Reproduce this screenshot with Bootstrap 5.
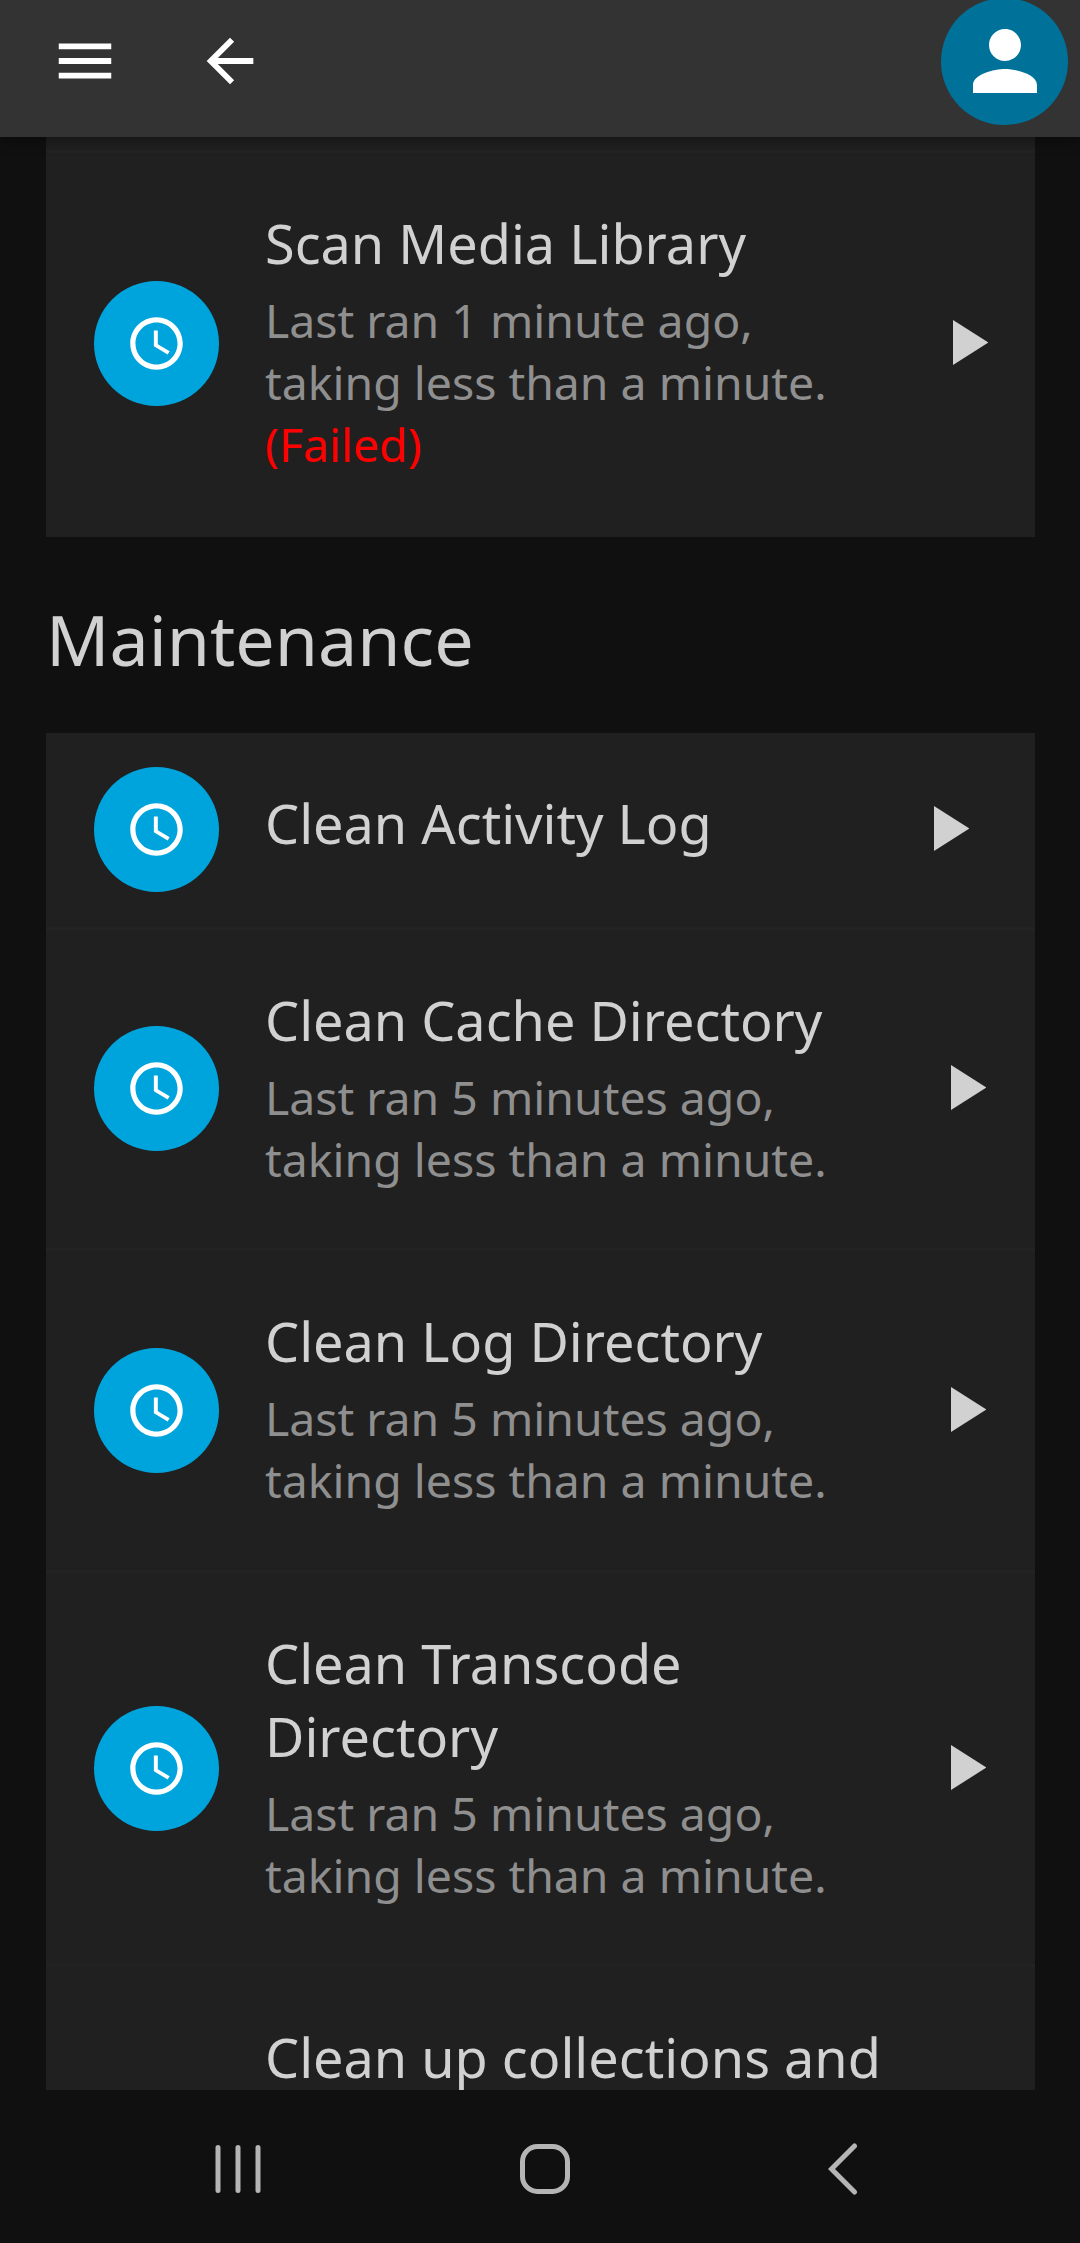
<!DOCTYPE html>
<html lang="en" data-bs-theme="dark">
<head>
<meta charset="utf-8">
<meta name="viewport" content="width=device-width, initial-scale=1">
<title>Scheduled Tasks</title>
<link rel="stylesheet" href="https://cdn.jsdelivr.net/npm/bootstrap@5.3.0/dist/css/bootstrap.min.css">
<style>
  body { font-family: "Noto Sans", sans-serif; background: #101010; color: #d1d1d1; height: 2243px; }
  .app-header { height: 137px; background: #333; padding: 0 12px 15px 50px; box-shadow: 0 2px 14px rgba(0,0,0,.45); z-index: 2; }
  .app-header a { color: #fff; }
  .header-back { margin-left: 75px; }
  .avatar { width: 127px; height: 127px; background: #00729a; color: #fff; margin-top: -1px; margin-bottom: -1px; }
  .page-view { height: 1953px; padding: 0 45px 0 46px; }
  .task-list { --bs-list-group-bg: #202020; --bs-list-group-color: #d1d1d1; --bs-list-group-border-radius: 0; }
  .task-row { border: 0; border-bottom: 3px solid #232323; padding: 0 49px 0 48px; }
  .task-row:last-child { border-bottom-color: #202020; }
  .task-disc { width: 125px; height: 125px; background: #00a4dc; color: #fff; margin-right: 46px; }
  .task-copy { padding: 54px 0 58.5px; width: 640px; }
  .task-copy.single { padding-bottom: 67px; }
  .task-name { font-size: 54px; line-height: 73px; font-weight: 400; margin: 0; color: #d1d1d1; }
  .task-note { font-size: 46.4px; line-height: 62px; margin: 9px 0 0; color: #8f8f8f; width: 570px; }
  .task-failed { color: #f00; }
  .task-play { color: #d1d1d1; margin-bottom: 2px; }
  .play-first { margin-right: -2px; }
  .play-wide { margin-right: 17px; }
  .cut-row { border: 0; }
  .group-title { font-size: 70px; line-height: 95px; font-weight: 400; color: #d1d1d1; margin: 55px 0 46px; }
  .system-nav { height: 153px; padding: 0 222px 0 214px; color: #b5b5b5; background: #101010; }
  .system-nav svg { margin-bottom: -5px; }
</style>
</head>
<body class="d-flex flex-column overflow-hidden m-0">
<svg class="d-none" xmlns="http://www.w3.org/2000/svg">
  <symbol id="clock" viewBox="0 0 24 24"><path fill="currentColor" d="M11.99 2C6.47 2 2 6.48 2 12s4.47 10 9.99 10C17.52 22 22 17.52 22 12S17.52 2 11.99 2zM12 20c-4.42 0-8-3.58-8-8s3.58-8 8-8 8 3.58 8 8-3.58 8-8 8zm.5-13H11v6l5.25 3.15.75-1.23-4.5-2.67z"/></symbol>
  <symbol id="play" viewBox="0 0 35.5 45"><path fill="currentColor" d="M0 0v45l35.5-22.5z"/></symbol>
</svg>

<header class="app-header position-relative flex-shrink-0 d-flex align-items-center">
  <a href="#" class="d-flex" aria-label="Menu"><svg width="70" height="70" viewBox="0 0 24 24"><path fill="currentColor" d="M3 18h18v-2H3v2zm0-5h18v-2H3v2zm0-7v2h18V6H3z"/></svg></a>
  <a href="#" class="d-flex header-back" aria-label="Back"><svg width="70" height="70" viewBox="0 0 24 24"><path fill="currentColor" d="M20 11H7.83l5.59-5.59L12 4l-8 8 8 8 1.41-1.41L7.83 13H20v-2z"/></svg></a>
  <a href="#" class="avatar ms-auto rounded-circle d-flex align-items-center justify-content-center" aria-label="User"><svg width="96" height="96" viewBox="0 0 24 24"><path fill="currentColor" d="M12 12c2.21 0 4-1.79 4-4s-1.79-4-4-4-4 1.79-4 4 1.79 4 4 4zm0 2c-2.67 0-8 1.34-8 4v2h16v-2c0-2.66-5.33-4-8-4z"/></svg></a>
</header>

<main class="page-view flex-shrink-0 overflow-hidden">
  <div class="list-group task-list">
    <div class="list-group-item task-row" style="height:16px"></div>
    <div class="list-group-item task-row d-flex align-items-center">
      <span class="task-disc rounded-circle flex-shrink-0 d-flex align-items-center justify-content-center"><svg width="63" height="63"><use href="#clock"/></svg></span>
      <div class="task-copy">
        <h3 class="task-name">Scan Media Library</h3>
        <p class="task-note">Last ran 1 minute ago, taking less than a minute. <span class="task-failed">(Failed)</span></p>
      </div>
      <svg class="task-play play-first ms-auto flex-shrink-0" width="35.5" height="45"><use href="#play"/></svg>
    </div>
  </div>

  <h2 class="group-title">Maintenance</h2>

  <div class="list-group task-list">
    <div class="list-group-item task-row d-flex align-items-center">
      <span class="task-disc rounded-circle flex-shrink-0 d-flex align-items-center justify-content-center"><svg width="63" height="63"><use href="#clock"/></svg></span>
      <div class="task-copy single"><h3 class="task-name">Clean Activity Log</h3></div>
      <svg class="task-play play-wide ms-auto flex-shrink-0" width="35.5" height="45"><use href="#play"/></svg>
    </div>
    <div class="list-group-item task-row d-flex align-items-center">
      <span class="task-disc rounded-circle flex-shrink-0 d-flex align-items-center justify-content-center"><svg width="63" height="63"><use href="#clock"/></svg></span>
      <div class="task-copy">
        <h3 class="task-name">Clean Cache Directory</h3>
        <p class="task-note">Last ran 5 minutes ago, taking less than a minute.</p>
      </div>
      <svg class="task-play ms-auto flex-shrink-0" width="35.5" height="45"><use href="#play"/></svg>
    </div>
    <div class="list-group-item task-row d-flex align-items-center">
      <span class="task-disc rounded-circle flex-shrink-0 d-flex align-items-center justify-content-center"><svg width="63" height="63"><use href="#clock"/></svg></span>
      <div class="task-copy">
        <h3 class="task-name">Clean Log Directory</h3>
        <p class="task-note">Last ran 5 minutes ago, taking less than a minute.</p>
      </div>
      <svg class="task-play ms-auto flex-shrink-0" width="35.5" height="45"><use href="#play"/></svg>
    </div>
    <div class="list-group-item task-row d-flex align-items-center">
      <span class="task-disc rounded-circle flex-shrink-0 d-flex align-items-center justify-content-center"><svg width="63" height="63"><use href="#clock"/></svg></span>
      <div class="task-copy">
        <h3 class="task-name">Clean Transcode<br>Directory</h3>
        <p class="task-note">Last ran 5 minutes ago, taking less than a minute.</p>
      </div>
      <svg class="task-play ms-auto flex-shrink-0" width="35.5" height="45"><use href="#play"/></svg>
    </div>
    <div class="list-group-item task-row d-flex">
      <span class="task-disc invisible flex-shrink-0"></span>
      <div class="task-copy"><h3 class="task-name">Clean up collections and</h3></div>
    </div>
  </div>
</main>

<nav class="system-nav flex-shrink-0 d-flex align-items-center justify-content-between">
  <svg width="48" height="50" viewBox="0 0 48 50" fill="none" stroke="currentColor" stroke-width="5" stroke-linecap="round"><path d="M4 3.5v43M24 3.5v43M44 3.5v43"/></svg>
  <svg width="50" height="50" viewBox="0 0 50 50" fill="none" stroke="currentColor" stroke-width="5"><rect x="2.5" y="2.5" width="45" height="45" rx="15"/></svg>
  <svg width="30" height="52" viewBox="0 0 30 52" fill="none" stroke="currentColor" stroke-width="5" stroke-linecap="round"><path d="M26.500 3L3.500 26l23 23"/></svg>
</nav>
<script src="https://cdn.jsdelivr.net/npm/bootstrap@5.3.0/dist/js/bootstrap.bundle.min.js"></script>
</body>
</html>
